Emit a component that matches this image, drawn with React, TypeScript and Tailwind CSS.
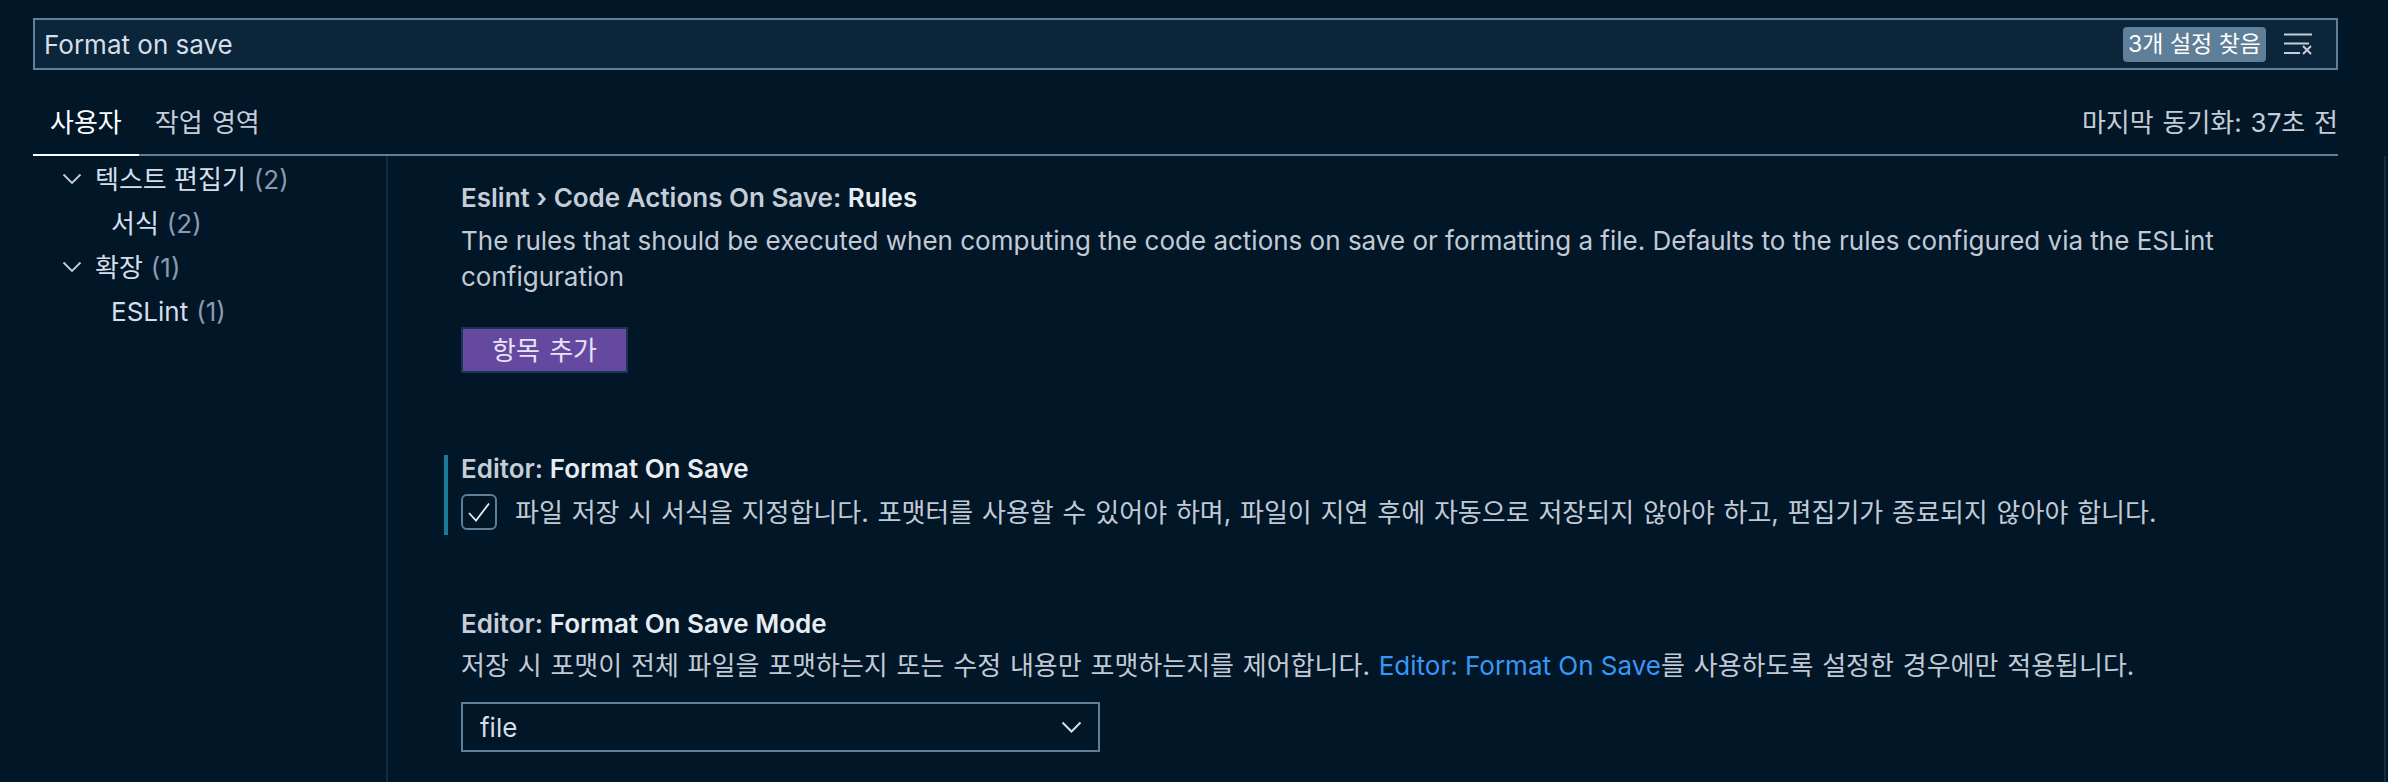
import React from 'react';

const Chevron = () => (
  <svg width="20" height="12" viewBox="0 0 20 12" fill="none">
    <path d="M1.5 1.5L10 10L18.5 1.5" stroke="#c5cdd8" strokeWidth="1.8" />
  </svg>
);

const TreeRow = ({ label, count, level }: { label: string; count: number; level: number }) => (
  <div className="h-[44px] flex items-center text-[26px] whitespace-nowrap">
    {level === 0 ? (
      <div className="ml-[29px] mr-[13px] flex items-center">
        <Chevron />
      </div>
    ) : (
      <div className="w-[78px]" />
    )}
    <span className="text-[#d6deeb]">{label}</span>
    <span className="ml-[8px] text-[#8a9bb0]">({count})</span>
  </div>
);

export default function App() {
  return (
    <div className="w-[2388px] h-[782px] bg-[#011627] overflow-hidden font-['Inter','Noto_Sans_CJK_KR',sans-serif] text-[#d6deeb]">
      {/* Search + tabs */}
      <div className="pl-[33px] pr-[50px] pt-[18px]">
        <div className="h-[52px] border-2 border-[#5f7e97] bg-[#0b253a] flex items-center pl-[9px] pr-[24px]">
          <span className="flex-1 text-[26px] text-[#d6deeb]">Format on save</span>
          <span className="h-[35px] px-[5px] rounded-[4px] bg-[#5f7e97] text-white text-[23px] flex items-center">
            3개 설정 찾음
          </span>
          <svg className="ml-[18px]" width="28" height="22" viewBox="0 0 28 22" fill="none">
            <path d="M0 1.5H28M0 10.5H25M0 20H16" stroke="#c5cdd8" strokeWidth="2" />
            <path d="M19 13L27 21M27 13L19 21" stroke="#c5cdd8" strokeWidth="2" />
          </svg>
        </div>

        <div className="h-[86px] flex items-stretch border-b-2 border-[#5f7e97]">
          <div className="px-[17px] pt-[20px] flex items-center -mb-[2px] border-b-2 border-white text-[26px] text-white">
            사용자
          </div>
          <div className="px-[16px] pt-[20px] flex items-center text-[26px] text-[#c5cdd8] [word-spacing:2px]">작업 영역</div>
          <div className="ml-auto pt-[20px] flex items-center text-[26px] text-[#c5cdd8] [word-spacing:1.5px]">
            마지막 동기화: 37초 전
          </div>
        </div>
      </div>

      {/* Body */}
      <div className="flex pl-[33px] h-[626px]">
        <div className="w-[353px] pt-[1px]">
          <TreeRow label="텍스트 편집기" count={2} level={0} />
          <TreeRow label="서식" count={2} level={1} />
          <TreeRow label="확장" count={1} level={0} />
          <TreeRow label="ESLint" count={1} level={1} />
        </div>

        <div className="w-[2000px] border-x-2 border-[#122d42] pl-[73px] pt-[24px]">
          {/* Eslint rules */}
          <div className="text-[26px] leading-[36px] font-semibold whitespace-nowrap">
            <span className="text-[#c5cdd8]">Eslint › Code Actions On Save: </span>
            <span className="text-[#e8edf2]">Rules</span>
          </div>
          <div className="mt-[7px] text-[26px] leading-[36px] text-[#c2cad6]">
            The rules that should be executed when computing the code actions on save or formatting a file. Defaults to the rules configured via the ESLint
            <br />
            configuration
          </div>
          <button className="mt-[32px] h-[46px] px-[29px] bg-[#6549a0] border-2 border-[#1b3550] text-[26px] text-[#e8e4f5] flex items-center [word-spacing:2px]">
            항목 추가
          </button>

          {/* Format On Save */}
          <div className="mt-[82px] -ml-[17px] pl-[13px] border-l-4 border-[#1a7a9a] pb-[5px]">
            <div className="text-[26px] leading-[28px] font-semibold whitespace-nowrap">
              <span className="text-[#c5cdd8]">Editor: </span>
              <span className="text-[#e8edf2]">Format On Save</span>
            </div>
            <div className="mt-[11px] h-[36px] flex items-center">
              <div className="w-[36px] h-[36px] rounded-[6px] border-2 border-[#5f7e97] flex items-center justify-center">
                <svg width="26" height="24" viewBox="0 0 26 24" fill="none">
                  <path d="M3 13L10 20.5L23 3.5" stroke="#e8edf2" strokeWidth="1.8" />
                </svg>
              </div>
              <span className="ml-[18px] text-[26px] text-[#c2cad6] whitespace-nowrap [word-spacing:1.5px]">
                파일 저장 시 서식을 지정합니다. 포맷터를 사용할 수 있어야 하며, 파일이 지연 후에 자동으로 저장되지 않아야 하고, 편집기가 종료되지 않아야 합니다.
              </span>
            </div>
          </div>

          {/* Format On Save Mode */}
          <div className="mt-[71px] text-[26px] leading-[36px] font-semibold whitespace-nowrap">
            <span className="text-[#c5cdd8]">Editor: </span>
            <span className="text-[#e8edf2]">Format On Save Mode</span>
          </div>
          <div className="mt-[6px] text-[26px] leading-[36px] text-[#c2cad6] whitespace-nowrap">
            <span className="[word-spacing:1.5px]">
              저장 시 포맷이 전체 파일을 포맷하는지 또는 수정 내용만 포맷하는지를 제어합니다.{' '}
            </span>
            <span className="text-[#3a96f5]">Editor: Format On Save</span>
            <span className="[word-spacing:1.5px]">를 사용하도록 설정한 경우에만 적용됩니다.</span>
          </div>
          <div className="mt-[18px] w-[639px] h-[50px] border-2 border-[#5f7e97] flex items-center pl-[17px] pr-[16px]">
            <span className="flex-1 text-[26px] text-[#d6deeb]">file</span>
            <svg width="21" height="12" viewBox="0 0 21 12" fill="none">
              <path d="M1.5 1.5L10.5 10.5L19.5 1.5" stroke="#d6deeb" strokeWidth="2" />
            </svg>
          </div>
        </div>
      </div>
    </div>
  );
}
